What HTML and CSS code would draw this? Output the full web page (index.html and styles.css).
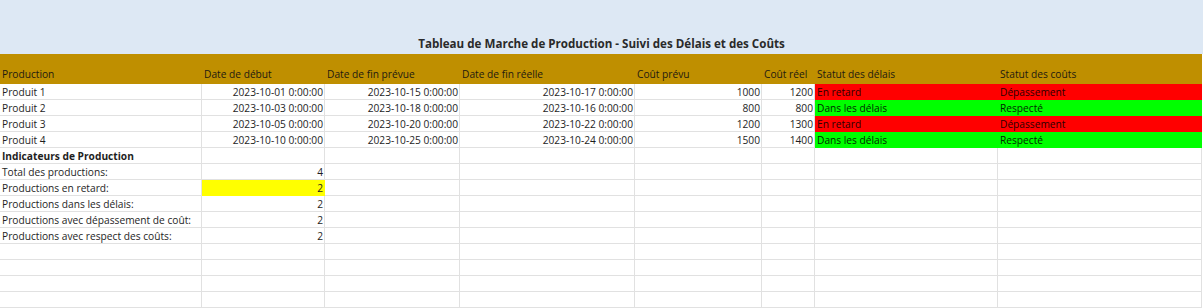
FILE: index.html
```html
<!DOCTYPE html>
<html lang="fr">
<head>
<meta charset="utf-8">
<title>Tableau de Marche de Production</title>
<link rel="stylesheet" href="styles.css">
</head>
<body>
<div class="sheet">
  <div class="title-row"><span class="title">Tableau de Marche de Production - Suivi des Délais et des Coûts</span></div>
  <div class="grid">
    <div class="c h">Production</div><div class="c h">Date de début</div><div class="c h">Date de fin prévue</div><div class="c h">Date de fin réelle</div><div class="c h">Coût prévu</div><div class="c h">Coût réel</div><div class="c h">Statut des délais</div><div class="c h">Statut des coûts</div>

    <div class="c">Produit 1</div><div class="c r">2023-10-01 0:00:00</div><div class="c r">2023-10-15 0:00:00</div><div class="c r">2023-10-17 0:00:00</div><div class="c r">1000</div><div class="c r">1200</div><div class="c red">En retard</div><div class="c red">Dépassement</div>
    <div class="c">Produit 2</div><div class="c r">2023-10-03 0:00:00</div><div class="c r">2023-10-18 0:00:00</div><div class="c r">2023-10-16 0:00:00</div><div class="c r">800</div><div class="c r">800</div><div class="c green">Dans les délais</div><div class="c green">Respecté</div>
    <div class="c">Produit 3</div><div class="c r">2023-10-05 0:00:00</div><div class="c r">2023-10-20 0:00:00</div><div class="c r">2023-10-22 0:00:00</div><div class="c r">1200</div><div class="c r">1300</div><div class="c red">En retard</div><div class="c red">Dépassement</div>
    <div class="c">Produit 4</div><div class="c r">2023-10-10 0:00:00</div><div class="c r">2023-10-25 0:00:00</div><div class="c r">2023-10-24 0:00:00</div><div class="c r">1500</div><div class="c r">1400</div><div class="c green">Dans les délais</div><div class="c green">Respecté</div>

    <div class="c b">Indicateurs de Production</div><div class="c"></div><div class="c"></div><div class="c"></div><div class="c"></div><div class="c"></div><div class="c"></div><div class="c"></div>
    <div class="c">Total des productions:</div><div class="c r">4</div><div class="c"></div><div class="c"></div><div class="c"></div><div class="c"></div><div class="c"></div><div class="c"></div>
    <div class="c">Productions en retard:</div><div class="c r yellow">2</div><div class="c"></div><div class="c"></div><div class="c"></div><div class="c"></div><div class="c"></div><div class="c"></div>
    <div class="c">Productions dans les délais:</div><div class="c r">2</div><div class="c"></div><div class="c"></div><div class="c"></div><div class="c"></div><div class="c"></div><div class="c"></div>
    <div class="c">Productions avec dépassement de coût:</div><div class="c r">2</div><div class="c"></div><div class="c"></div><div class="c"></div><div class="c"></div><div class="c"></div><div class="c"></div>
    <div class="c">Productions avec respect des coûts:</div><div class="c r">2</div><div class="c"></div><div class="c"></div><div class="c"></div><div class="c"></div><div class="c"></div><div class="c"></div>

    <div class="c"></div><div class="c"></div><div class="c"></div><div class="c"></div><div class="c"></div><div class="c"></div><div class="c"></div><div class="c"></div>
    <div class="c"></div><div class="c"></div><div class="c"></div><div class="c"></div><div class="c"></div><div class="c"></div><div class="c"></div><div class="c"></div>
    <div class="c"></div><div class="c"></div><div class="c"></div><div class="c"></div><div class="c"></div><div class="c"></div><div class="c"></div><div class="c"></div>
    <div class="c"></div><div class="c"></div><div class="c"></div><div class="c"></div><div class="c"></div><div class="c"></div><div class="c"></div><div class="c"></div>
  </div>
</div>
</body>
</html>
```
FILE: styles.css
```css
html, body {
  margin: 0;
  padding: 0;
  background: #ffffff;
}

body {
  font-family: "Open Sans", "Liberation Sans", Arial, sans-serif;
  font-size: 10.2px;
  color: #1e1e1e;
}

.sheet {
  width: 1203px;
}

.title-row {
  height: 54px;
  background: #dde8f4;
  display: flex;
  align-items: flex-end;
  justify-content: center;
  padding: 0 0 2px 0;
  box-sizing: border-box;
}

.title {
  font-weight: bold;
  font-size: 11.6px;
  line-height: 16px;
  color: #2a2a2a;
}

.grid {
  display: grid;
  grid-template-columns: 202px 123px 135px 175px 127px 53px 183px 204px;
  grid-template-rows: 30px;
  grid-auto-rows: 16px;
}

.c {
  box-sizing: border-box;
  border-right: 1px solid #e1e1e1;
  border-bottom: 1px solid #e1e1e1;
  padding: 1px 2px 0 2px;
  line-height: 15px;
  white-space: nowrap;
  overflow: hidden;
}

.h {
  background: #bf8f00;
  border-color: #bf8f00;
  display: flex;
  align-items: flex-end;
  padding-bottom: 1px;
  color: #1e1a10;
}

.r {
  text-align: right;
  padding-right: 1px;
}

.b {
  font-weight: bold;
}

.red {
  background: #ff0000;
  border-color: #ff0000;
  color: #2a0000;
}

.green {
  background: #00ff00;
  border-color: #00ff00;
  color: #002a00;
}

.yellow {
  background: #ffff00;
  border-color: #ffff00;
}
```
